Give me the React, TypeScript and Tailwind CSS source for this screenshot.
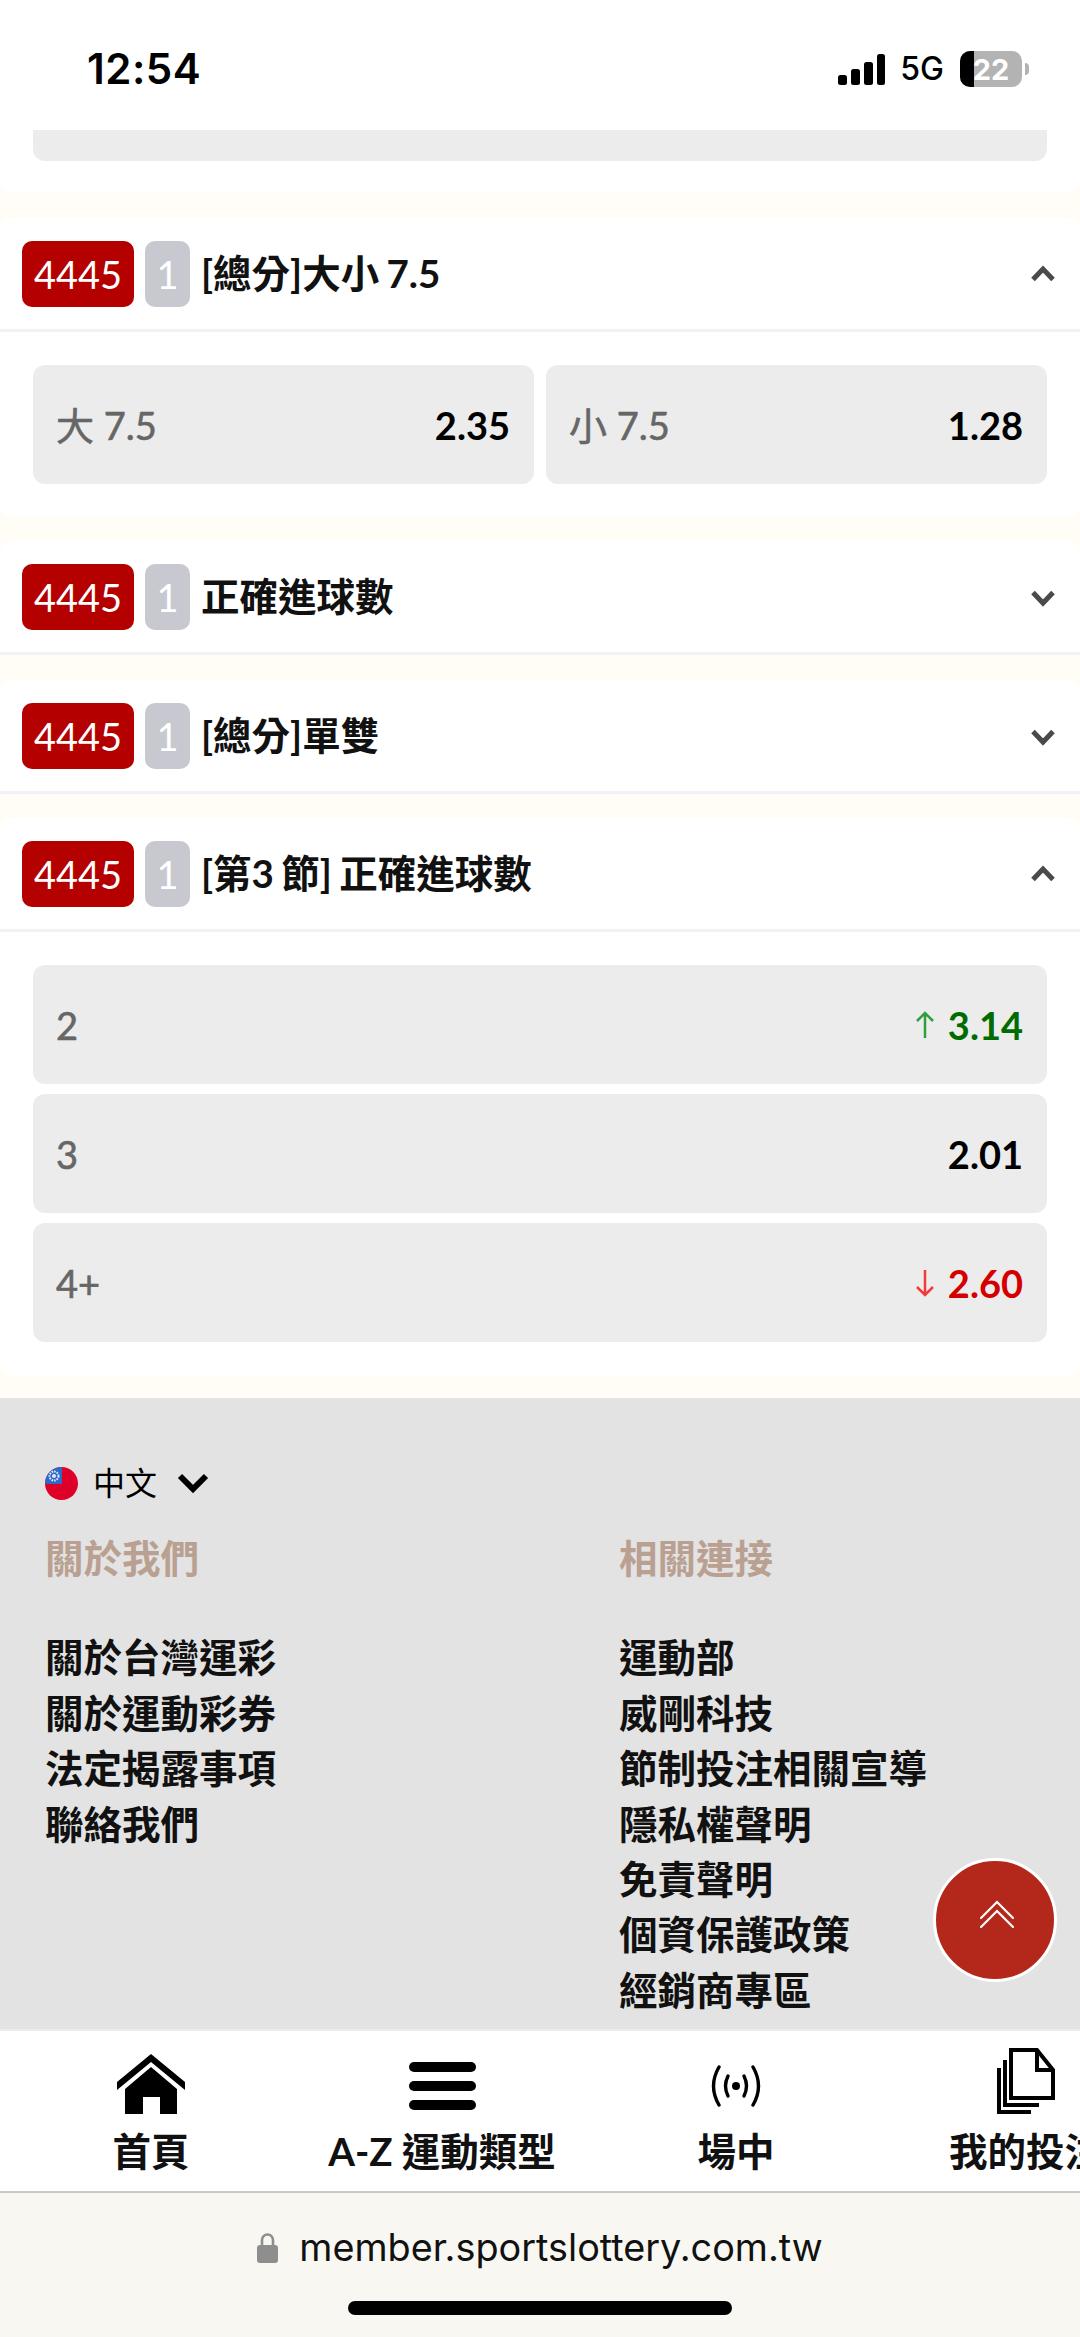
const CJK = "font-['Lato','Noto_Sans_CJK_TC',sans-serif]";

const ABOUT_LINKS = ["關於台灣運彩", "關於運動彩券", "法定揭露事項", "聯絡我們"];
const RELATED_LINKS = ["運動部", "威剛科技", "節制投注相關宣導", "隱私權聲明", "免責聲明", "個資保護政策", "經銷商專區"];

function Chevron({ up }: { up?: boolean }) {
  return (
    <svg width="26" height="18" viewBox="0 0 26 18" fill="none" className={up ? "rotate-180" : "translate-y-[1px]"}>
      <path d="M3 3.5 L13 14 L23 3.5" stroke="#4a4a4a" strokeWidth="5" />
    </svg>
  );
}

function MarketHeader({ title, open }: { title: string; open?: boolean }) {
  return (
    <div className="h-[114px] flex items-center pl-[22px] pr-[24px] border-b-[3px] border-[#f1f1f6]">
      <span className="w-[112px] h-[66px] shrink-0 flex items-center justify-center rounded-[10px] bg-[#b50000] text-white text-[38px] leading-none">
        4445
      </span>
      <span className="ml-[11px] w-[45px] h-[66px] shrink-0 flex items-center justify-center rounded-[10px] bg-[#c8c8d0] text-white text-[38px] leading-none">
        1
      </span>
      <h2 className="ml-[11px] flex-1 text-[38.5px] leading-none font-bold text-[#111] whitespace-nowrap [word-spacing:-2px]">
        {title}
      </h2>
      <Chevron up={open} />
    </div>
  );
}

function Odd({ label, value, move }: { label: string; value: string; move?: "up" | "down" }) {
  const valueColor = move === "up" ? "text-[#006b00]" : move === "down" ? "text-[#d40000]" : "text-black";
  return (
    <div className="w-full h-[119px] flex items-center justify-between pl-[23px] pr-[24px] rounded-[12px] bg-[#ececec]">
      <span className="text-[38px] leading-none font-normal text-[#666] [-webkit-text-stroke:0.6px_#666]">{label}</span>
      <span className="flex items-center gap-[12px]">
        {move === "up" && (
          <svg width="22" height="28" viewBox="0 0 22 28" fill="none" stroke="#2f9e3f" strokeWidth="2.5">
            <path d="M11 27 V2 M3 10 L11 2 L19 10" />
          </svg>
        )}
        {move === "down" && (
          <svg width="22" height="28" viewBox="0 0 22 28" fill="none" stroke="#f23a3a" strokeWidth="2.5">
            <path d="M11 1 V26 M3 18 L11 26 L19 18" />
          </svg>
        )}
        <span className={`text-[38px] leading-none font-bold ${valueColor}`}>{value}</span>
      </span>
    </div>
  );
}

function StatusBar() {
  return (
    <div className="h-[130px] shrink-0 bg-white flex items-center justify-between pl-[87px] pr-[51px] pt-[8px] font-['Inter',sans-serif]">
      <span className="text-[42px] leading-none font-semibold text-black tracking-[0.5px]">12:54</span>
      <div className="flex items-center">
        <svg width="47" height="31" viewBox="0 0 47 31" fill="black">
          <rect x="0" y="21" width="9" height="10" rx="2.5" />
          <rect x="13" y="15" width="9" height="16" rx="2.5" />
          <rect x="26" y="8" width="9" height="23" rx="2.5" />
          <rect x="39" y="0" width="8" height="31" rx="2.5" />
        </svg>
        <span className="ml-[15px] text-[32px] leading-none font-medium text-black">5G</span>
        <div className="ml-[16px] relative w-[62px] h-[36px] rounded-[10px] bg-[#b3b3b3] overflow-hidden flex items-center justify-center">
          <span className="absolute left-0 top-0 bottom-0 w-[14px] bg-black" />
          <span className="relative text-[29px] leading-none font-bold text-white">22</span>
        </div>
        <span className="ml-[3px] w-[4px] h-[12px] rounded-r-full bg-[#b3b3b3]" />
      </div>
    </div>
  );
}

function Footer() {
  return (
    <footer className="relative flex-1 min-h-0 overflow-hidden bg-[#e3e3e3] pl-[45px] pt-[67px]">
      <div className="flex items-center h-[36px]">
        <svg width="33" height="33" viewBox="0 0 33 33">
          <defs>
            <clipPath id="flag-clip">
              <circle cx="16.5" cy="16.5" r="16.5" />
            </clipPath>
          </defs>
          <g clipPath="url(#flag-clip)">
            <rect width="33" height="33" fill="#de0029" />
            <rect width="17" height="17" fill="#2d69c9" />
            <circle cx="9" cy="9" r="4.5" fill="none" stroke="#dfe8f7" strokeWidth="2" strokeDasharray="1.6 1" />
            <circle cx="9" cy="9" r="2" fill="#dfe8f7" />
          </g>
        </svg>
        <span className="ml-[15px] text-[32px] leading-none text-black">中文</span>
        <svg className="ml-[20px]" width="32" height="22" viewBox="0 0 32 22" fill="none">
          <path d="M3 4 L16 17 L29 4" stroke="black" strokeWidth="6" />
        </svg>
      </div>
      <div className="mt-[35px] flex">
        <div className="w-[574px] shrink-0">
          <h3 className="text-[38.5px] leading-[44px] font-bold text-[#b9a091]">關於我們</h3>
          <ul className="mt-[50px] flex flex-col">
            {ABOUT_LINKS.map((link) => (
              <li key={link} className="h-[55.4px] flex items-center text-[38.5px] leading-none font-bold text-[#111]">
                {link}
              </li>
            ))}
          </ul>
        </div>
        <div>
          <h3 className="text-[38.5px] leading-[44px] font-bold text-[#b9a091]">相關連接</h3>
          <ul className="mt-[50px] flex flex-col">
            {RELATED_LINKS.map((link) => (
              <li key={link} className="h-[55.4px] flex items-center text-[38.5px] leading-none font-bold text-[#111]">
                {link}
              </li>
            ))}
          </ul>
        </div>
      </div>
    </footer>
  );
}

function BottomNav() {
  return (
    <nav className="h-[164px] shrink-0 flex overflow-hidden bg-white border-t-[2px] border-b-[2px] border-t-[#ececec] border-b-[#c9c9c9]">
      <div className="w-[302px] shrink-0 flex flex-col items-center">
        <div className="h-[101px] flex items-end pb-[18px]">
          <svg width="68" height="60" viewBox="0 0 68 60" fill="black">
            <path d="M34 0 L68 28 L68 36 L34 8 L0 36 L0 28 Z" />
            <path d="M34 13 L60 35 L60 60 L43 60 L43 43 L26 43 L26 60 L8 60 L8 35 Z" />
          </svg>
        </div>
        <span className="text-[38.5px] leading-none font-bold text-[#111]">首頁</span>
      </div>
      <div className="w-[280px] shrink-0 flex flex-col items-center">
        <div className="h-[101px] flex items-end pb-[22px]">
          <div className="w-[67px] flex flex-col gap-[9px]">
            <span className="h-[10px] rounded-full bg-black" />
            <span className="h-[10px] rounded-full bg-black" />
            <span className="h-[10px] rounded-full bg-black" />
          </div>
        </div>
        <span className="text-[38.5px] leading-none font-bold text-[#111] whitespace-nowrap">A-Z 運動類型</span>
      </div>
      <div className="w-[308px] shrink-0 flex flex-col items-center">
        <div className="h-[101px] flex items-end pb-[25px]">
          <svg width="52" height="42" viewBox="0 0 52 42" fill="none" stroke="black" strokeWidth="3.4" strokeLinecap="round">
            <circle cx="26" cy="21" r="4" fill="black" stroke="none" />
            <path d="M18 11 Q13 21 18 31 M34 11 Q39 21 34 31" />
            <path d="M9 2 Q-2 21 9 40 M43 2 Q54 21 43 40" />
          </svg>
        </div>
        <span className="text-[38.5px] leading-none font-bold text-[#111]">場中</span>
      </div>
      <div className="w-[272px] shrink-0 flex flex-col items-center">
        <div className="h-[101px] flex items-end pb-[18px]">
          <svg width="58" height="66" viewBox="0 0 58 66" fill="none" stroke="black" strokeWidth="4">
            <path d="M14 2 H40 L56 22 V50 H14 Z" />
            <path d="M40 2 V22 H56" />
            <path d="M8 12 V57 H42" />
            <path d="M2 20 V64 H34" />
          </svg>
        </div>
        <span className="text-[38.5px] leading-none font-bold text-[#111] whitespace-nowrap">我的投注</span>
      </div>
    </nav>
  );
}

function BrowserBar() {
  return (
    <div className="h-[144px] shrink-0 flex flex-col items-center bg-[#f9f7f1] font-['Inter',sans-serif]">
      <div className="h-[108px] flex items-center pt-[2px]">
        <svg width="21" height="30" viewBox="0 0 21 30" fill="#8e8e8e">
          <path d="M5 13 V7 a5.5 5.5 0 0 1 11 0 V13" fill="none" stroke="#8e8e8e" strokeWidth="2.6" />
          <rect x="0" y="12" width="21" height="18" rx="3" />
        </svg>
        <span className="ml-[21px] text-[37.8px] leading-none text-[#111]">member.sportslottery.com.tw</span>
      </div>
      <div className="w-[384px] h-[14px] rounded-full bg-black" />
    </div>
  );
}

export default function App() {
  return (
    <div className={`relative w-[1080px] h-[2337px] flex flex-col overflow-hidden bg-[#fffdf5] ${CJK}`}>
      <StatusBar />

      {/* previous market, scrolled off */}
      <div className="h-[63px] shrink-0 px-[33px] bg-white rounded-b-[12px]">
        <div className="h-[31px] rounded-b-[12px] bg-[#ececec]" />
      </div>

      <section className="mt-[25px] shrink-0 bg-white rounded-[12px]">
        <MarketHeader title="[總分]大小 7.5" open />
        <div className="px-[33px] pt-[33px] pb-[33px] flex gap-[12px]">
          <Odd label="大 7.5" value="2.35" />
          <Odd label="小 7.5" value="1.28" />
        </div>
      </section>

      <section className="mt-[24px] shrink-0 bg-white rounded-t-[12px]">
        <MarketHeader title="正確進球數" />
      </section>

      <section className="mt-[25px] shrink-0 bg-white rounded-t-[12px]">
        <MarketHeader title="[總分]單雙" />
      </section>

      <section className="mt-[24px] shrink-0 bg-white rounded-[12px]">
        <MarketHeader title="[第3 節] 正確進球數" open />
        <div className="px-[33px] pt-[33px] pb-[33px] flex flex-col gap-[10px]">
          <Odd label="2" value="3.14" move="up" />
          <Odd label="3" value="2.01" />
          <Odd label="4+" value="2.60" move="down" />
        </div>
      </section>

      <div className="h-[23px] shrink-0" />
      <Footer />
      <BottomNav />
      <BrowserBar />

      <button className="absolute left-[933px] top-[1858px] w-[124px] h-[124px] rounded-full bg-[#b4281b] border-[3px] border-white flex items-center justify-center">
        <svg className="ml-[3px] mb-[10px]" width="36" height="30" viewBox="0 0 36 30" fill="none" stroke="white" strokeWidth="2.2" strokeLinecap="round">
          <path d="M2 18 L18 2 L34 18" />
          <path d="M2 27 L18 11 L34 27" />
        </svg>
      </button>
    </div>
  );
}
